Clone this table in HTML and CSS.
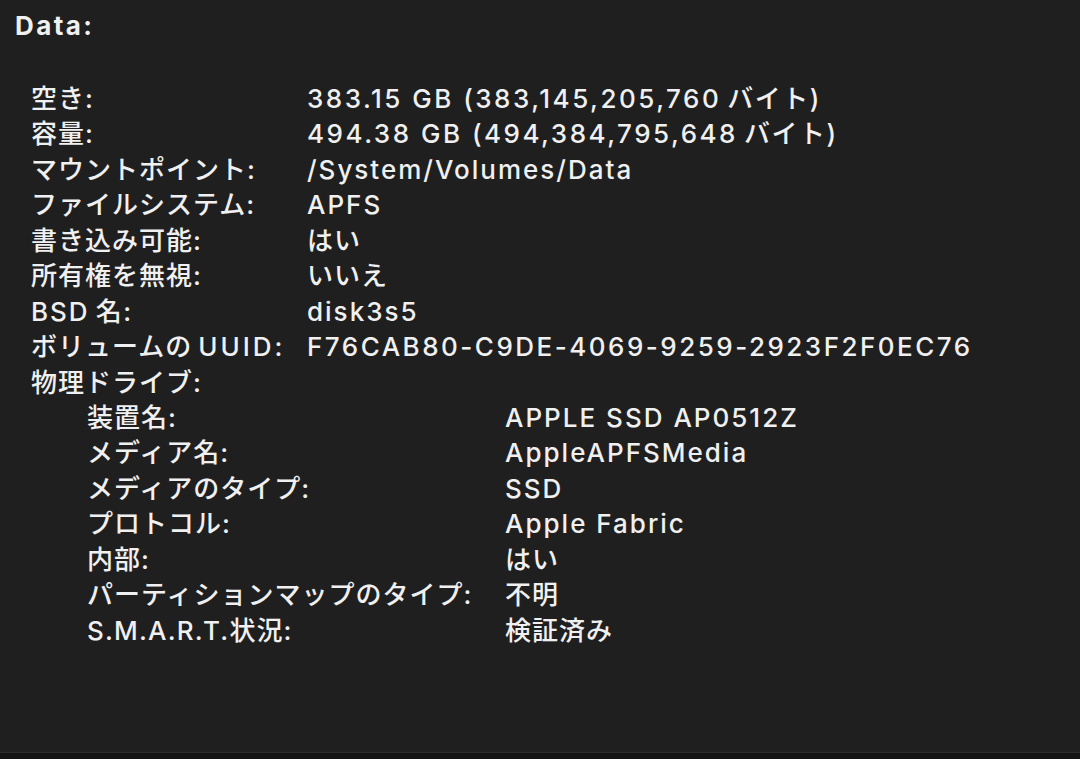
FILE: index.html
```html
<!DOCTYPE html>
<html lang="ja">
<head>
<meta charset="utf-8">
<title>Data</title>
<link rel="stylesheet" href="styles.css">
</head>
<body>
<div class="panel">
  <div class="title">Data:</div>
  <div class="list">
    <div class="row"><span class="key">空き:</span><span class="val num">383.15 GB (383,145,205,760<span class="jp">バイト)</span></span></div>
    <div class="row"><span class="key">容量:</span><span class="val num">494.38 GB (494,384,795,648<span class="jp">バイト)</span></span></div>
    <div class="row"><span class="key">マウントポイント:</span><span class="val">/System/Volumes/Data</span></div>
    <div class="row"><span class="key">ファイルシステム:</span><span class="val">APFS</span></div>
    <div class="row"><span class="key">書き込み可能:</span><span class="val jv">はい</span></div>
    <div class="row"><span class="key">所有権を無視:</span><span class="val jv">いいえ</span></div>
    <div class="row"><span class="key"><span class="lat">BSD</span><span class="jp">名:</span></span><span class="val">disk3s5</span></div>
    <div class="row"><span class="key">ボリュームの<span class="lat wide">UUID:</span></span><span class="val num">F76CAB80-C9DE-4069-9259-2923F2F0EC76</span></div>
    <div class="row"><span class="key">物理ドライブ:</span><span class="val"></span></div>
    <div class="sub">
      <div class="row"><span class="key">装置名:</span><span class="val">APPLE SSD AP0512Z</span></div>
      <div class="row"><span class="key">メディア名:</span><span class="val">AppleAPFSMedia</span></div>
      <div class="row"><span class="key">メディアのタイプ:</span><span class="val">SSD</span></div>
      <div class="row"><span class="key">プロトコル:</span><span class="val">Apple Fabric</span></div>
      <div class="row"><span class="key">内部:</span><span class="val jv">はい</span></div>
      <div class="row"><span class="key">パーティションマップのタイプ:</span><span class="val jv">不明</span></div>
      <div class="row"><span class="key"><span class="lat tight">S.M.A.R.T.</span>状況:</span><span class="val jv">検証済み</span></div>
    </div>
  </div>
</div>
</body>
</html>
```

FILE: styles.css
```css
html, body {
  margin: 0;
  padding: 0;
  background: #141414;
}
body {
  width: 1080px;
  height: 759px;
  overflow: hidden;
}
.panel {
  height: 753px;
  background: #1f1f1f;
  border-bottom: 1px solid #2b2b2b;
  box-sizing: border-box;
  padding: 8px 0 0 0;
  color: #f0f0f0;
  font-family: "Inter", "Noto Sans CJK JP", sans-serif;
  font-size: 26px;
  font-weight: 500;
}
.title {
  font-weight: 700;
  height: 35.5px;
  line-height: 35.5px;
  padding-left: 15px;
  letter-spacing: 2.4px;
}
.list {
  margin-top: 37.3px;
  padding-left: 31px;
}
.row {
  display: grid;
  grid-template-columns: 276px 1fr;
  height: 35.47px;
  line-height: 35.47px;
  white-space: nowrap;
}
.key {
  letter-spacing: 1px;
}
.val {
  letter-spacing: 2px;
}
.val.num {
  letter-spacing: 2.5px;
}
.val.jv {
  letter-spacing: 1px;
}
.lat {
  letter-spacing: 2px;
}
.lat.wide {
  margin-left: 6px;
  letter-spacing: 3px;
}
.lat.tight {
  letter-spacing: 1.2px;
}
.jp {
  margin-left: 6px;
  letter-spacing: 1.5px;
}
.sub {
  padding-left: 56px;
}
.sub .row {
  grid-template-columns: 418px 1fr;
}
```
